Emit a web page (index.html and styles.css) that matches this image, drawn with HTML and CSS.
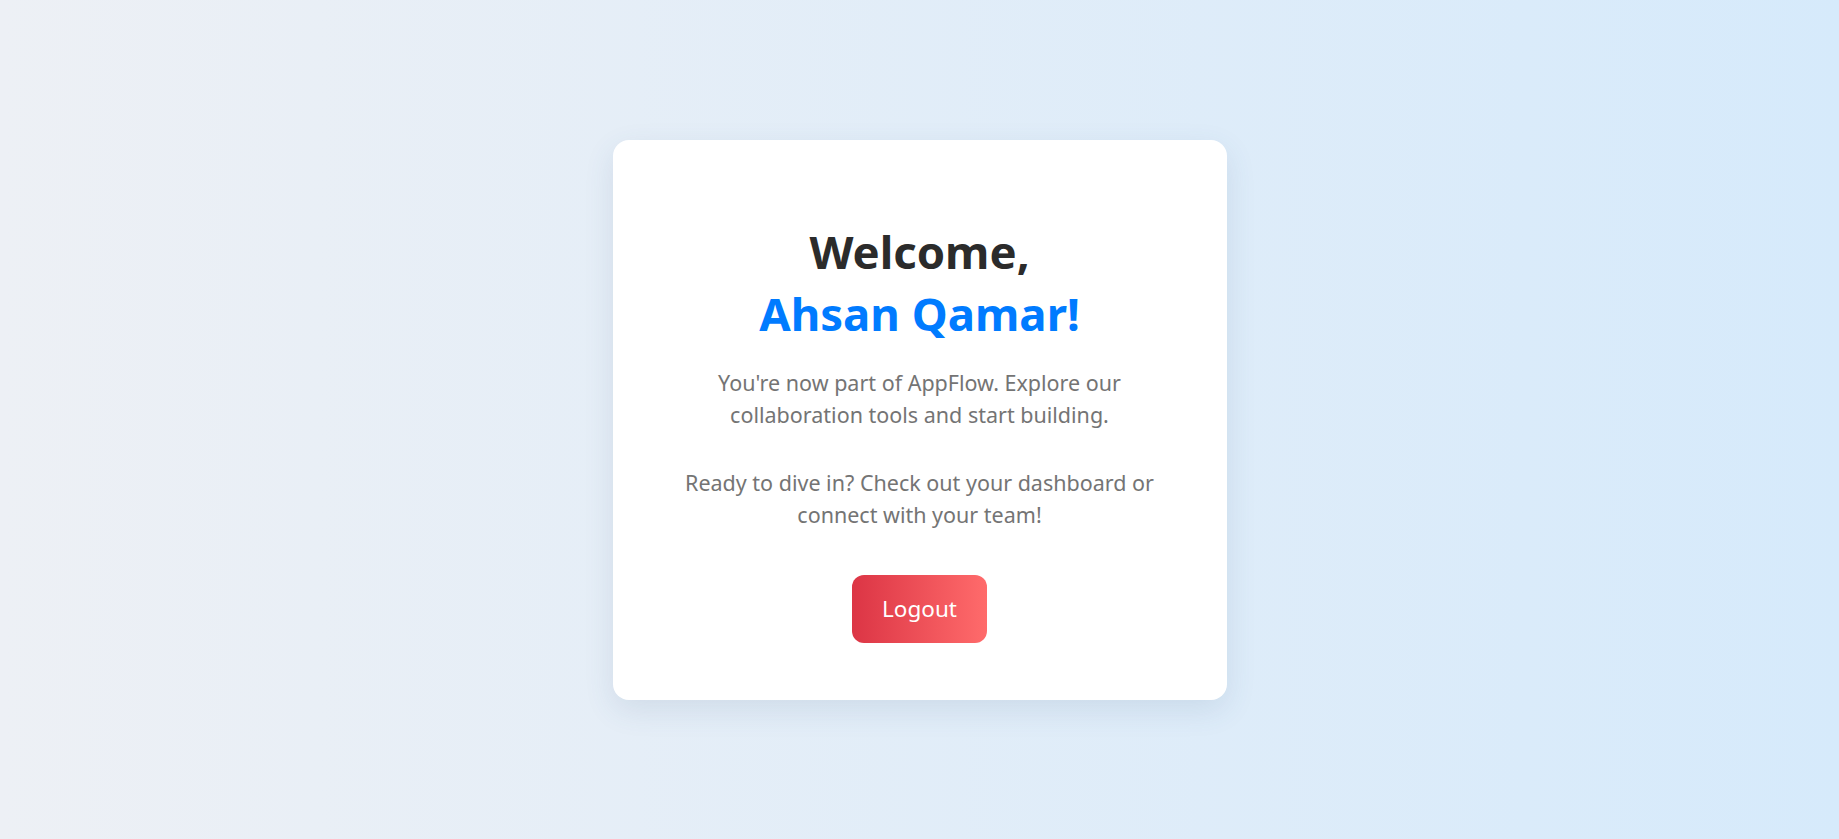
FILE: index.html
```html
<!DOCTYPE html>
<html lang="en">
<head>
<meta charset="utf-8">
<title>Welcome</title>
<link rel="stylesheet" href="styles.css">
</head>
<body>
<main class="page">
  <section class="card">
    <h1 class="title">Welcome,<br><span class="name">Ahsan Qamar!</span></h1>
    <p class="text">You're now part of AppFlow. Explore our<br>collaboration tools and start building.</p>
    <p class="text">Ready to dive in? Check out your dashboard or<br>connect with your team!</p>
    <div class="actions">
      <button class="logout" type="button">Logout</button>
    </div>
  </section>
</main>
</body>
</html>
```

FILE: styles.css
```css
* { box-sizing: border-box; }
html, body { margin: 0; padding: 0; }
body {
  font-family: "Noto Sans", "Open Sans", sans-serif;
  background: linear-gradient(90deg, #edf0f5 0%, #d6eafb 100%);
  min-height: 100vh;
}
.page {
  min-height: 100vh;
  display: flex;
  align-items: center;
  justify-content: center;
}
.card {
  width: 614px;
  height: 560px;
  background: #ffffff;
  border-radius: 16px;
  box-shadow: 0 10px 30px rgba(60, 90, 130, 0.12);
  padding: 80px 30px 0;
  text-align: center;
}
.title {
  margin: 0 0 23px;
  font-size: 45.5px;
  line-height: 62px;
  font-weight: 700;
  color: #2b2b2b;
}
.name { color: #007bff; }
.text {
  margin: 0 0 36px;
  font-size: 21.5px;
  line-height: 32px;
  color: #747474;
}
.actions {
  display: flex;
  justify-content: center;
  margin-top: 44px;
}
.logout {
  width: 135px;
  height: 68px;
  border: 0;
  border-radius: 12px;
  background: linear-gradient(90deg, #dc3545 0%, #ff6b6b 100%);
  color: #ffffff;
  font-family: inherit;
  font-size: 22.5px;
  cursor: pointer;
}
```
